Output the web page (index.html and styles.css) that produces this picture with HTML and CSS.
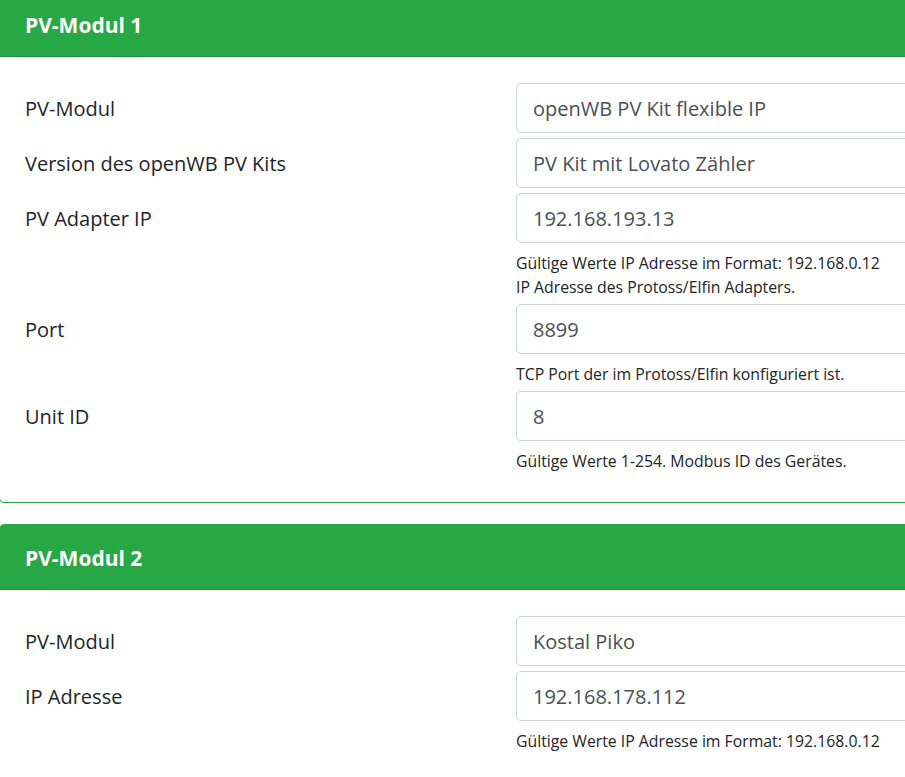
FILE: index.html
```html
<!DOCTYPE html>
<html lang="de">
<head>
<meta charset="utf-8">
<title>PV-Module</title>
<link rel="stylesheet" href="styles.css">
</head>
<body>
<div class="page">
  <section class="card">
    <header class="card-header">PV-Modul 1</header>
    <div class="card-body">
      <div class="row">
        <label class="label">PV-Modul</label>
        <div class="field"><div class="input">openWB PV Kit flexible IP</div></div>
      </div>
      <div class="row">
        <label class="label">Version des openWB PV Kits</label>
        <div class="field"><div class="input">PV Kit mit Lovato Zähler</div></div>
      </div>
      <div class="row">
        <label class="label">PV Adapter IP</label>
        <div class="field">
          <div class="input">192.168.193.13</div>
          <div class="help">Gültige Werte IP Adresse im Format: 192.168.0.12<br>IP Adresse des Protoss/Elfin Adapters.</div>
        </div>
      </div>
      <div class="row">
        <label class="label">Port</label>
        <div class="field">
          <div class="input">8899</div>
          <div class="help">TCP Port der im Protoss/Elfin konfiguriert ist.</div>
        </div>
      </div>
      <div class="row">
        <label class="label">Unit ID</label>
        <div class="field">
          <div class="input">8</div>
          <div class="help">Gültige Werte 1-254. Modbus ID des Gerätes.</div>
        </div>
      </div>
    </div>
  </section>
  <section class="card">
    <header class="card-header">PV-Modul 2</header>
    <div class="card-body">
      <div class="row">
        <label class="label">PV-Modul</label>
        <div class="field"><div class="input">Kostal Piko</div></div>
      </div>
      <div class="row">
        <label class="label">IP Adresse</label>
        <div class="field">
          <div class="input">192.168.178.112</div>
          <div class="help">Gültige Werte IP Adresse im Format: 192.168.0.12</div>
        </div>
      </div>
    </div>
  </section>
</div>
</body>
</html>
```
FILE: styles.css
```css
html, body {
  margin: 0;
  padding: 0;
  background: #fff;
  overflow: hidden;
}
body {
  font-family: "Open Sans", "Noto Sans", "Liberation Sans", sans-serif;
  color: #212529;
}
.page {
  width: 1010px;
  margin: -9px 0 0 -1px;
}
.card {
  border: 1px solid #28a745;
  border-radius: 5px;
  margin-bottom: 21px;
  overflow: hidden;
  background: #fff;
}
.card-header {
  background: #28a745;
  color: #fff;
  font-weight: 700;
  font-size: 21px;
  line-height: 35px;
  padding: 16px 25px 13px;
  border-bottom: 1px solid rgba(0, 0, 0, 0.125);
}
.card-body {
  padding: 26px 25px 24px;
}
.row {
  display: grid;
  grid-template-columns: 491px 1fr;
  margin-bottom: 5px;
}
.label {
  font-size: 20px;
  line-height: 49px;
  padding-top: 1px;
}
.input {
  height: 47px;
  border: 1px solid #ced4da;
  border-radius: 5px;
  padding: 1px 16px 0;
  font-size: 20px;
  line-height: 47px;
  color: #495057;
}
.help {
  margin-top: 8px;
  font-size: 15.8px;
  line-height: 24px;
  color: #212529;
}
```
